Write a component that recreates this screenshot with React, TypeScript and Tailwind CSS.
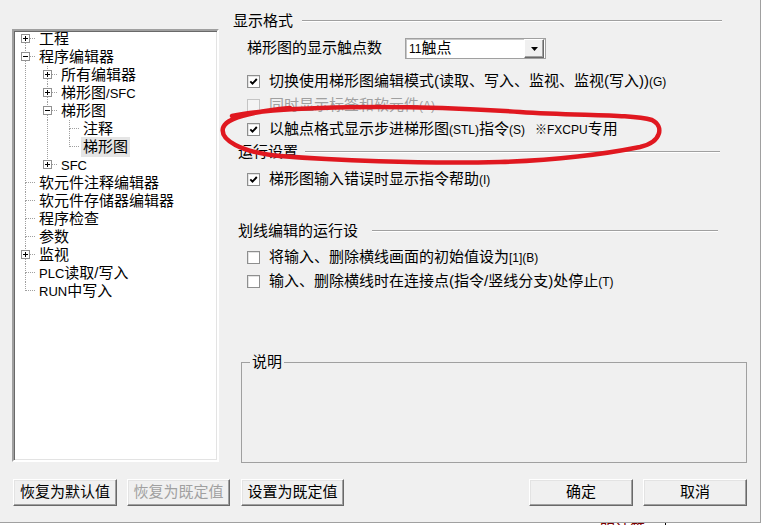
import React from 'react';

type Node = {
  label: React.ReactNode;
  level: number;
  guides: boolean[];
  exp?: '+' | '-';
  first?: boolean;
  last?: boolean;
  selected?: boolean;
};

const lat = (t: string) => <span className="text-[13px]">{t}</span>;
const sm = (t: string) => <span className="text-[12px]">{t}</span>;

const treeData: Node[] = [
  { label: '工程', level: 0, guides: [], exp: '+', first: true },
  { label: '程序编辑器', level: 0, guides: [], exp: '-' },
  { label: '所有编辑器', level: 1, guides: [true], exp: '+' },
  { label: <>梯形图{lat('/SFC')}</>, level: 1, guides: [true], exp: '+' },
  { label: '梯形图', level: 1, guides: [true], exp: '-' },
  { label: '注释', level: 2, guides: [true, true] },
  { label: '梯形图', level: 2, guides: [true, true], last: true, selected: true },
  { label: lat('SFC'), level: 1, guides: [true], exp: '+', last: true },
  { label: '软元件注释编辑器', level: 0, guides: [] },
  { label: '软元件存储器编辑器', level: 0, guides: [] },
  { label: '程序检查', level: 0, guides: [] },
  { label: '参数', level: 0, guides: [] },
  { label: '监视', level: 0, guides: [], exp: '+' },
  { label: <>{lat('PLC')}读取/写入</>, level: 0, guides: [] },
  { label: <>{lat('RUN')}中写入</>, level: 0, guides: [], last: true },
];

const DOT = '#a0a0a0';

function Guide({ on }: { on: boolean }) {
  return (
    <svg width="22" height="18" className="shrink-0" shapeRendering="crispEdges">
      {on && <line x1="11.5" y1="0" x2="11.5" y2="18" stroke={DOT} strokeDasharray="1 1" />}
    </svg>
  );
}

function Joint({ n }: { n: Node }) {
  return (
    <svg width="22" height="18" className="shrink-0" shapeRendering="crispEdges">
      {!n.first && <line x1="11.5" y1="0" x2="11.5" y2="9" stroke={DOT} strokeDasharray="1 1" />}
      {!n.last && <line x1="11.5" y1="9" x2="11.5" y2="18" stroke={DOT} strokeDasharray="1 1" />}
      <line x1="12" y1="8.5" x2="22" y2="8.5" stroke={DOT} strokeDasharray="1 1" />
      {n.exp && (
        <>
          <rect x="7.5" y="4.5" width="8" height="8" fill="white" stroke="#919191" />
          <line x1="9" y1="8.5" x2="14" y2="8.5" stroke="#000" />
          {n.exp === '+' && <line x1="11.5" y1="6" x2="11.5" y2="11" stroke="#000" />}
        </>
      )}
    </svg>
  );
}

function TreeRow({ n }: { n: Node }) {
  return (
    <div className="flex h-[18px] items-center">
      {n.guides.map((g, i) => (
        <Guide key={i} on={g} />
      ))}
      <Joint n={n} />
      {n.selected ? (
        <span className="ml-px h-[20px] bg-[#e5e5e5] px-[2px] leading-[20px]">{n.label}</span>
      ) : (
        <span className="ml-[3px] leading-[18px]">{n.label}</span>
      )}
    </div>
  );
}

function Check({ checked, disabled }: { checked?: boolean; disabled?: boolean }) {
  return (
    <span
      className={
        disabled
          ? 'flex h-[13px] w-[13px] shrink-0 items-center justify-center border border-[#c4c4c4] bg-[#f4f4f4]'
          : 'flex h-[13px] w-[13px] shrink-0 items-center justify-center border border-[#8e8f8f] bg-white shadow-[inset_1px_1px_0_#e3e3e3]'
      }
    >
      {checked && (
        <svg width="9" height="9" viewBox="0 0 9 9">
          <path d="M1.3 4.3 L3.5 6.6 L7.8 2" fill="none" stroke="#000" strokeWidth="1.9" />
        </svg>
      )}
    </span>
  );
}

function CheckRow({ checked, disabled, children }: { checked?: boolean; disabled?: boolean; children: React.ReactNode }) {
  return (
    <div className={disabled ? 'flex h-[24px] items-center pl-[14px] text-[#a0a0a0]' : 'flex h-[24px] items-center pl-[14px]'}>
      <Check checked={checked} disabled={disabled} />
      <span className="ml-[9px] whitespace-nowrap">{children}</span>
    </div>
  );
}

function GroupHead({ label, pl, gap, w }: { label: string; pl: string; gap: string; w: string }) {
  return (
    <div className={`flex h-[20px] items-center ${pl}`}>
      <span className="whitespace-nowrap">{label}</span>
      <div className={`h-[2px] border-t border-b border-t-[#a0a0a0] border-b-white ${gap} ${w}`} />
    </div>
  );
}

function Btn({ children, w, ml, disabled }: { children: React.ReactNode; w: string; ml: string; disabled?: boolean }) {
  return (
    <div
      className={`flex h-[27px] items-center justify-center border border-t-white border-l-white border-r-[#696969] border-b-[#696969] bg-[#f0f0f0] shadow-[inset_-1px_-1px_0_#a0a0a0,inset_1px_1px_0_#e3e3e3] ${w} ${ml} ${
        disabled ? 'text-[#a0a0a0]' : 'text-black'
      }`}
    >
      {children}
    </div>
  );
}

export default function App() {
  return (
    <div className="relative h-[525px] w-[762px] overflow-hidden bg-white font-['Liberation_Sans','Noto_Sans_CJK_SC',sans-serif] text-[15px] text-black">
      <div className="flex h-[523px] w-[761px] flex-col border-r border-b border-[#a0a0a0] bg-[#f0f0f0]">
        <div className="flex h-[463px]">
          {/* tree */}
          <div className="ml-[12px] mt-[29px] h-[433px] w-[207px] border-2 border-t-[#a0a0a0] border-l-[#a0a0a0] border-r-white border-b-white bg-white shadow-[inset_1px_1px_0_#696969,inset_-1px_-1px_0_#e3e3e3]">
            <div className="-mt-px">
              {treeData.map((n, i) => (
                <TreeRow key={i} n={n} />
              ))}
            </div>
          </div>

          {/* settings */}
          <div className="ml-[14px] flex w-[514px] flex-col">
            <div className="mt-[11px]">
              <GroupHead label="显示格式" pl="pl-0" gap="ml-[9px]" w="w-[420px]" />
            </div>
            <div className="mt-[7px] flex h-[21px] items-center pl-[14px]">
              <span>梯形图的显示触点数</span>
              <div className="ml-[23px] flex h-[21px] w-[141px] items-center border border-[#a0a0a0] bg-white shadow-[inset_1px_1px_0_#c8c8c8]">
                <span className="ml-[3px] flex-1">{sm('11')}触点</span>
                <div className="mr-px flex h-[19px] w-[20px] items-center justify-center border border-t-white border-l-white border-r-[#696969] border-b-[#696969] bg-[#f0f0f0] shadow-[inset_-1px_-1px_0_#a0a0a0]">
                  <svg width="7" height="4" viewBox="0 0 7 4">
                    <path d="M0 0 H7 L3.5 4 Z" fill="#000" />
                  </svg>
                </div>
              </div>
            </div>
            <div className="mt-[10px]">
              <CheckRow checked>
                切换使用梯形图编辑模式(读取、写入、监视、监视(写入)){sm('(G)')}
              </CheckRow>
              <CheckRow disabled>同时显示标签和软元件{sm('(A)')}</CheckRow>
              <CheckRow checked>
                以触点格式显示步进梯形图{sm('(STL)')}指令{sm('(S)')}
                <span className="ml-[10px]">{sm('※FXCPU')}专用</span>
              </CheckRow>
            </div>
            <div className="mt-px">
              <GroupHead label="运行设置" pl="pl-[5px]" gap="ml-[7px]" w="w-[415px]" />
            </div>
            <div className="mt-[5px]">
              <CheckRow checked>梯形图输入错误时显示指令帮助{sm('(I)')}</CheckRow>
            </div>
            <div className="mt-[30px]">
              <GroupHead label="划线编辑的运行设" pl="pl-[5px]" gap="ml-[14px]" w="w-[346px]" />
            </div>
            <div className="mt-[4px]">
              <CheckRow>将输入、删除横线画面的初始值设为{sm('[1](B)')}</CheckRow>
              <CheckRow>输入、删除横线时在连接点(指令/竖线分支)处停止{sm('(T)')}</CheckRow>
            </div>
            <fieldset className="ml-[8px] mt-[59px] h-[111px] w-[506px] border border-[#a0a0a0]">
              <legend className="ml-[8px] px-[2px] leading-[20px]">说明</legend>
            </fieldset>
          </div>
        </div>

        {/* buttons */}
        <div className="mt-[16px] flex">
          <Btn w="w-[104px]" ml="ml-[13px]">恢复为默认值</Btn>
          <Btn w="w-[103px]" ml="ml-[10px]" disabled>
            恢复为既定值
          </Btn>
          <Btn w="w-[103px]" ml="ml-[11px]">设置为既定值</Btn>
          <Btn w="w-[104px]" ml="ml-[185px]">确定</Btn>
          <Btn w="w-[104px]" ml="ml-[10px]">取消</Btn>
        </div>
      </div>

      <div className="flex h-[2px] overflow-hidden">
        <span className="ml-[600px] -mt-px text-[15px] leading-[15px] text-[#7a0000]">明计算</span>
        <span className="ml-[20px] h-[2px] w-px bg-black" />
      </div>

      {/* hand-drawn red annotation */}
      <svg className="pointer-events-none absolute inset-0" width="762" height="525">
        <path
          d="M232 116 C280 106 400 104 520 112 C580 116 630 114 652 120 C664 126 662 142 640 147 C600 155 560 160 500 162 C420 164 330 160 280 156 C240 152 220 140 223 128 C226 118 250 112 290 108"
          fill="none"
          stroke="#e01820"
          strokeWidth="4.5"
          strokeLinecap="round"
          strokeLinejoin="round"
        />
      </svg>
    </div>
  );
}
